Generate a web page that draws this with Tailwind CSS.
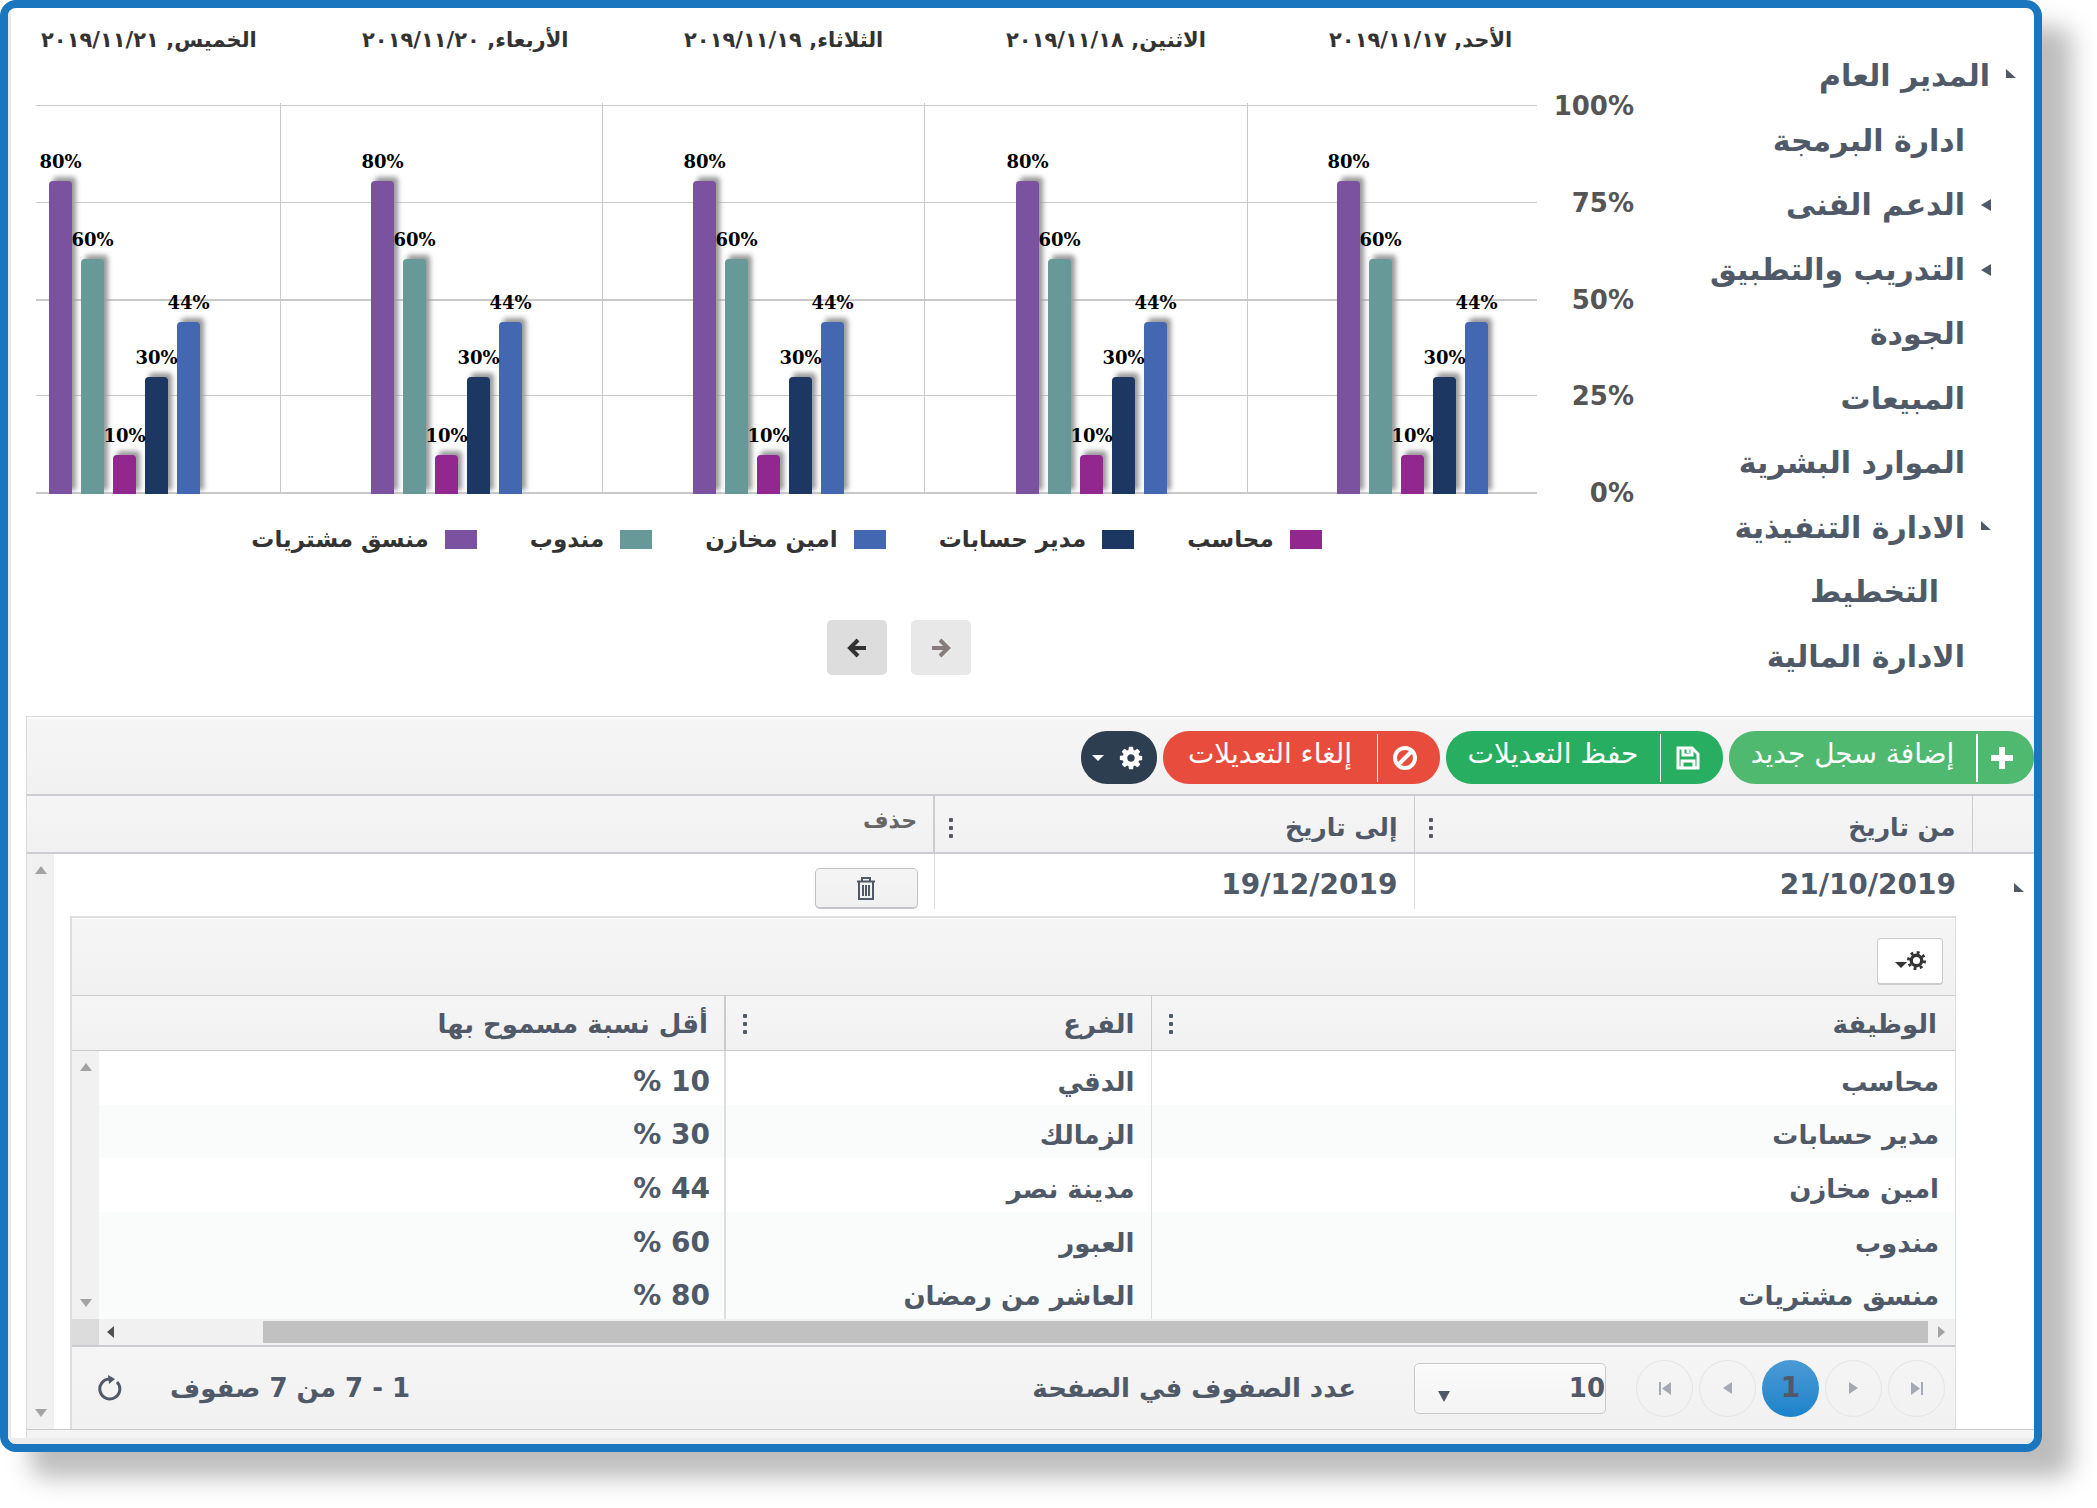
<!DOCTYPE html>
<html lang="ar" dir="rtl">
<head>
<meta charset="utf-8">
<meta name="viewport" content="width=device-width, initial-scale=1">
<title>المدير العام</title>
<script src="https://cdn.jsdelivr.net/npm/@tailwindcss/browser@4"></script>
</head>
<body class="bg-white font-['DejaVu_Sans',sans-serif] text-[#4f5968]">
<svg class="hidden" aria-hidden="true">
  <symbol id="cog" viewBox="0 0 1792 1792"><path fill="currentColor" d="M1152 896q0-106-75-181t-181-75-181 75-75 181 75 181 181 75 181-75 75-181zm512-109v222q0 12-8 23t-20 13l-185 28q-19 54-39 91 35 50 107 138 10 12 10 25t-9 23q-27 37-99 108t-94 71q-12 0-26-9l-138-108q-44 23-91 38-16 136-29 186-7 28-36 28h-222q-14 0-24.5-8.5t-11.5-21.5l-28-184q-49-16-90-37l-141 107q-10 9-25 9-14 0-25-11-126-114-165-168-7-10-7-23 0-12 8-23 15-21 51-66.500t54-70.500q-27-50-41-99l-183-27q-13-2-21-12.500t-8-23.500v-222q0-12 8-23t19-13l186-28q14-46 39-92-40-57-107-138-10-12-10-24 0-10 9-23 26-36 98.500-107.500t94.500-71.500q13 0 26 10l138 107q44-23 91-38 16-136 29-186 7-28 36-28h222q14 0 24.500 8.500t11.500 21.500l28 184q49 16 90 37l142-107q9-9 24-9 13 0 25 10 129 119 165 170 7 8 7 22 0 12-8 23-15 21-51 66.500t-54 70.500q26 50 41 98l183 28q13 2 21 12.500t8 23.500z"/></symbol>
  <symbol id="dots" viewBox="0 0 6 22"><g fill="currentColor"><rect x="1" y="1" width="4" height="4" rx="1"/><rect x="1" y="9" width="4" height="4" rx="1"/><rect x="1" y="17" width="4" height="4" rx="1"/></g></symbol>
  <symbol id="open" viewBox="0 0 10 10"><path fill="currentColor" d="M0 0v9h10z"/></symbol>
  <symbol id="closed" viewBox="0 0 10 12"><path fill="currentColor" d="M10 0v12L0 6z"/></symbol>
  <symbol id="up" viewBox="0 0 12 8"><path fill="currentColor" d="M0 8h12L6 0z"/></symbol>
  <symbol id="down" viewBox="0 0 12 8"><path fill="currentColor" d="M0 0h12L6 8z"/></symbol>
</svg>

<div class="pr-[55px] pb-[55px]">
<div class="overflow-hidden rounded-[16px] border-8 border-[#1976bf] bg-white shadow-[30px_26px_24px_#bdbdbd]">
  <main class="border-l-[3px] border-[#ebebeb]">
    <div class="flex h-[708px] flex-row-reverse justify-between">
      <section dir="ltr" class="min-w-0 flex-1 pl-[25px] pt-[22px]" aria-label="النسب">
        <div id="dates" class="mr-[155px] grid h-[75px] grid-cols-[245fr_322fr_322fr_323fr_289fr] text-[21px] leading-[20px] font-bold text-[#333]"></div>
        <div class="flex">
          <div class="relative h-[389px] min-w-0 flex-1 border-b-2 border-[#c9c9c9]">
            <div class="grid h-full grid-rows-4" aria-hidden="true">
              <div class="border-t border-[#c9c9c9]"></div><div class="border-t border-[#c9c9c9]"></div><div class="border-t-2 border-[#c9c9c9]"></div><div class="border-t border-[#c9c9c9]"></div>
            </div>
            <div id="plot" class="absolute inset-x-0 -bottom-[2px] grid h-[391px] grid-cols-[245fr_322fr_322fr_323fr_289fr]"></div>
          </div>
          <div class="-mt-[11px] -mb-[11px] flex w-[155px] shrink-0 flex-col justify-between pr-[58px] text-right text-[26px] leading-[24px] font-bold text-[#555]">
            <span>100%</span><span>75%</span><span>50%</span><span>25%</span><span>0%</span>
          </div>
        </div>
        <ul dir="rtl" class="mr-[155px] mt-[31px] flex justify-center gap-[53px] text-[23px] leading-[28px] font-bold text-[#333]">
          <li class="flex items-center gap-4"><span class="h-[19px] w-8 bg-[#92278f]"></span>محاسب</li>
          <li class="flex items-center gap-4"><span class="h-[19px] w-8 bg-[#1d3763]"></span>مدير حسابات</li>
          <li class="flex items-center gap-4"><span class="h-[19px] w-8 bg-[#4368b1]"></span>امين مخازن</li>
          <li class="flex items-center gap-4"><span class="h-[19px] w-8 bg-[#669998]"></span>مندوب</li>
          <li class="flex items-center gap-4"><span class="h-[19px] w-8 bg-[#7b529f]"></span>منسق مشتريات</li>
        </ul>
        <div class="mt-[67px] flex justify-center gap-6 pl-[70px]">
          <button class="flex h-[55px] w-[60px] items-center justify-center rounded-[5px] bg-[#ddd] text-[#333]" aria-label="السابق"><svg class="h-5 w-5" viewBox="0 0 20 20" fill="none" stroke="currentColor" stroke-width="4"><path d="M19 10H4M11 2L3 10l8 8"/></svg></button>
          <button class="flex h-[55px] w-[60px] items-center justify-center rounded-[5px] bg-[#e8e8e8] text-[#857b7b]" aria-label="التالي"><svg class="h-5 w-5" viewBox="0 0 20 20" fill="none" stroke="currentColor" stroke-width="4"><path d="M1 10h15M9 2l8 8-8 8"/></svg></button>
        </div>
      </section>
      <nav class="w-[342px] shrink-0 pt-[36px] text-[30px] leading-[40px] font-bold" aria-label="الادارات">
        <ul class="grid h-[645px] grid-rows-10 items-center">
          <li class="flex items-center gap-4 pr-[18px]"><svg class="mb-1 h-[10px] w-[10px]"><use href="#open"/></svg><a href="#">المدير العام</a></li>
          <li class="pr-[69px]"><a href="#">ادارة البرمجة</a></li>
          <li class="flex items-center gap-4 pr-[43px]"><svg class="h-3 w-[10px]"><use href="#closed"/></svg><a href="#">الدعم الفنى</a></li>
          <li class="flex items-center gap-4 pr-[43px]"><svg class="h-3 w-[10px]"><use href="#closed"/></svg><a href="#">التدريب والتطبيق</a></li>
          <li class="pr-[69px]"><a href="#">الجودة</a></li>
          <li class="pr-[69px]"><a href="#">المبيعات</a></li>
          <li class="pr-[69px]"><a href="#">الموارد البشرية</a></li>
          <li class="flex items-center gap-4 pr-[43px]"><svg class="mb-1 h-[10px] w-[10px]"><use href="#open"/></svg><a href="#">الادارة التنفيذية</a></li>
          <li class="pr-[95px]"><a href="#">التخطيط</a></li>
          <li class="pr-[69px]"><a href="#">الادارة المالية</a></li>
        </ul>
      </nav>
    </div>

    <section class="ml-[15px] border-l border-t border-[#d9dadc]">
      <div class="flex h-[77px] items-center gap-[6px] border-t-2 border-white bg-linear-to-b from-[#f5f5f5] to-[#f1f1f1] pt-[2px] text-[28px] leading-[36px] text-white">
        <button class="flex h-[53px] w-[305px] items-center rounded-[26px] bg-[#4fb96f]"><span class="flex h-12 w-[58px] items-center justify-center border-l-2 border-white pr-2"><svg class="h-6 w-6" viewBox="0 0 24 24" fill="currentColor"><path d="M9 1h6v8h8v6h-8v8H9v-8H1V9h8z"/></svg></span><span class="flex-1 pb-2">إضافة سجل جديد</span></button>
        <button class="flex h-[53px] w-[277px] items-center rounded-[26px] bg-[#27ae60]"><span class="flex h-12 w-[63px] items-center justify-center border-l border-white pr-2"><svg class="h-6 w-6" viewBox="0 0 24 24" fill="none" stroke="currentColor" stroke-width="3"><path d="M2 2h14l6 6v14H2z"/><path d="M7 2v7h9V2M12 3v4M6 22v-7h12v7"/></svg></span><span class="flex-1 pb-2">حفظ التعديلات</span></button>
        <button class="flex h-[53px] w-[277px] items-center rounded-[26px] bg-[#e74c3c]"><span class="flex h-12 w-[63px] items-center justify-center border-l border-white pr-2"><svg class="h-6 w-6" viewBox="0 0 24 24" fill="none" stroke="currentColor" stroke-width="4"><circle cx="12" cy="12" r="10"/><path d="M5 19L19 5"/></svg></span><span class="flex-1 pb-2">إلغاء التعديلات</span></button>
        <button class="flex h-[53px] w-[76px] items-center justify-center gap-[14px] rounded-[26px] bg-[#2c3e50] pr-[2px]" aria-label="إعدادات"><svg class="h-[26px] w-[26px]"><use href="#cog"/></svg><svg class="h-[6px] w-3" viewBox="0 0 12 6"><path fill="currentColor" d="M0 0h12L6 6z"/></svg></button>
      </div>
      <table class="w-full table-fixed border-y-2 border-[#cccdd2] bg-linear-to-b from-[#f5f5f5] to-[#f1f1f1] text-right text-[25px]">
        <colgroup><col class="w-[62px]"><col class="w-[558px]"><col class="w-[480px]"><col></colgroup>
        <thead><tr class="h-[58px]">
          <th></th>
          <th class="border-r border-[#cccdd2] pr-4 pl-[13px]"><div class="flex items-center justify-between pt-2">من تاريخ<svg class="h-[22px] w-[6px]"><use href="#dots"/></svg></div></th>
          <th class="border-r border-[#cccdd2] pr-4 pl-[13px]"><div class="flex items-center justify-between pt-2">إلى تاريخ<svg class="h-[22px] w-[6px]"><use href="#dots"/></svg></div></th>
          <th class="border-r-2 border-[#cccdd2] pr-4 pb-2 text-[22px] text-[#666]">حذف</th>
        </tr></thead>
      </table>

      <div class="flex">
        <div class="min-w-0 flex-1">
          <table class="w-full table-fixed text-right">
            <colgroup><col class="w-[62px]"><col class="w-[558px]"><col class="w-[480px]"><col></colgroup>
            <tbody>
              <tr class="h-[55px] text-[28px] font-bold">
                <td class="pr-[10px] pt-3"><svg class="h-[10px] w-[10px]"><use href="#open"/></svg></td>
                <td class="pt-[6px] pr-4">21/10/2019</td>
                <td class="border-r border-[#dedee0] pt-[6px] pr-4">19/12/2019</td>
                <td class="border-r border-[#dedee0] pr-4 align-bottom">
                  <button class="flex h-[41px] w-[103px] items-center justify-center rounded-[5px] border border-b-2 border-[#c3c4c9] bg-linear-to-b from-[#f5f5f5] to-[#f0f0f0]" aria-label="حذف"><svg class="h-[23px] w-[18px]" viewBox="0 0 18 23" fill="none" stroke="currentColor" stroke-width="2"><path d="M0 4.500h18M5 4V1h8v3M2 5v17h14V5M6 8v11M9 8v11M12 8v11"/></svg></button>
                </td>
              </tr>
              <tr><td colspan="4" class="pt-[7px] pr-[78px] pl-4 align-top">

                <div class="border-t-2 border-r border-l-2 border-[#dcdddd]">
                  <div class="flex h-[77px] items-center border-t border-white bg-linear-to-b from-[#f5f5f5] to-[#f1f1f1] pt-2 pr-3">
                    <button class="flex h-[47px] w-[66px] items-center justify-center rounded-[4px] border border-b-2 border-[#ccc] bg-white text-[#333]" aria-label="إعدادات"><svg class="h-[19px] w-[19px]" viewBox="0 0 20 20" fill="none" stroke="currentColor"><circle cx="10" cy="10" r="5.500" stroke-width="3.500"/><circle cx="10" cy="10" r="8.500" stroke-width="3" stroke-dasharray="3 3.675"/></svg><svg class="mt-2 h-[6px] w-3" viewBox="0 0 12 6"><path fill="currentColor" d="M0 0h12L6 6z"/></svg></button>
                  </div>
                  <table class="w-full table-fixed border-y border-[#cacbcd] bg-linear-to-b from-[#f5f5f5] to-[#f1f1f1] text-right text-[26px] leading-[36px]">
                    <colgroup><col class="w-[804px]"><col class="w-[426px]"><col></colgroup>
                    <thead><tr class="h-[55px]">
                      <th class="pt-[2px] pr-[18px] pl-4"><div class="flex items-center justify-between">الوظيفة<svg class="h-[22px] w-[6px]"><use href="#dots"/></svg></div></th>
                      <th class="border-r border-[#cacbcd] pt-[2px] pr-4 pl-4"><div class="flex items-center justify-between">الفرع<svg class="h-[22px] w-[6px]"><use href="#dots"/></svg></div></th>
                      <th class="border-r-2 border-[#cacbcd] pt-[2px] pr-4">أقل نسبة مسموح بها</th>
                    </tr></thead>
                  </table>
                  <div class="flex h-[268px]">
                    <table class="h-full min-w-0 flex-1 table-fixed text-right text-[26px] leading-[36px] font-bold">
                      <colgroup><col class="w-[804px]"><col class="w-[426px]"><col></colgroup>
                      <tbody>
                        <tr><td class="pt-2 pr-4">محاسب</td><td class="border-r border-[#dedee0] pt-2 pr-4">الدقي</td><td class="border-r-2 border-[#dedee0] pt-2 pr-[14px] text-[28px]">10 %</td></tr>
                        <tr class="bg-[#fafcfb]"><td class="pt-2 pr-4">مدير حسابات</td><td class="border-r border-[#dedee0] pt-2 pr-4">الزمالك</td><td class="border-r-2 border-[#dedee0] pt-2 pr-[14px] text-[28px]">30 %</td></tr>
                        <tr><td class="pt-2 pr-4">امين مخازن</td><td class="border-r border-[#dedee0] pt-2 pr-4">مدينة نصر</td><td class="border-r-2 border-[#dedee0] pt-2 pr-[14px] text-[28px]">44 %</td></tr>
                        <tr class="bg-[#fafcfb]"><td class="pt-2 pr-4">مندوب</td><td class="border-r border-[#dedee0] pt-2 pr-4">العبور</td><td class="border-r-2 border-[#dedee0] pt-2 pr-[14px] text-[28px]">60 %</td></tr>
                        <tr class="bg-[#fafcfb]"><td class="pt-2 pr-4">منسق مشتريات</td><td class="border-r border-[#dedee0] pt-2 pr-4">العاشر من رمضان</td><td class="border-r-2 border-[#dedee0] pt-2 pr-[14px] text-[28px]">80 %</td></tr>
                      </tbody>
                    </table>
                    <div class="flex w-[27px] shrink-0 flex-col items-center justify-between bg-[#f1f1f1] py-3 text-[#a3a3a3]"><svg class="h-2 w-3"><use href="#up"/></svg><svg class="h-2 w-3"><use href="#down"/></svg></div>
                  </div>
                  <div class="flex h-[26px] items-center bg-[#f1f1f1]">
                    <svg class="mx-[10px] h-3 w-[7px] text-[#a3a3a3]" viewBox="0 0 7 12"><path fill="currentColor" d="M0 0v12l7-6z"/></svg>
                    <div class="ml-[149px] h-[22px] flex-1 bg-[#c1c1c1]"></div>
                    <svg class="ml-2 h-3 w-[7px] text-[#505050]" viewBox="0 0 7 12"><path fill="currentColor" d="M7 0v12L0 6z"/></svg>
                    <div class="h-[26px] w-[27px] bg-[#dcdcdc]"></div>
                  </div>
                  <div class="flex h-[84px] items-center border-t-2 border-[#cccdd2] bg-linear-to-b from-[#f5f5f5] to-[#f1f1f1] pr-[10px] pl-[26px] text-[26px] font-bold">
                    <div class="flex gap-[6px] text-[#a4a9b3]">
                      <button class="flex h-[57px] w-[57px] items-center justify-center rounded-full border border-[#e4e4e4]" aria-label="الصفحة الأخيرة"><svg class="h-[13px] w-3" viewBox="0 0 12 13"><path fill="currentColor" d="M0 0v13l9-6.500zM10 0h2v13h-2z"/></svg></button>
                      <button class="flex h-[57px] w-[57px] items-center justify-center rounded-full border border-[#e4e4e4]" aria-label="الصفحة التالية"><svg class="h-3 w-[9px]" viewBox="0 0 9 12"><path fill="currentColor" d="M0 0v12l9-6z"/></svg></button>
                      <button class="flex h-[57px] w-[57px] items-center justify-center rounded-full bg-linear-to-b from-[#4a9ad4] to-[#1a83cb] text-[28px] text-[#4f5968]">1</button>
                      <button class="flex h-[57px] w-[57px] items-center justify-center rounded-full border border-[#e4e4e4]" aria-label="الصفحة السابقة"><svg class="h-3 w-[9px]" viewBox="0 0 9 12"><path fill="currentColor" d="M9 0v12L0 6z"/></svg></button>
                      <button class="flex h-[57px] w-[57px] items-center justify-center rounded-full border border-[#e4e4e4]" aria-label="الصفحة الأولى"><svg class="h-[13px] w-3" viewBox="0 0 12 13"><path fill="currentColor" d="M12 0v13L3 6.500zM0 0h2v13H0z"/></svg></button>
                    </div>
                    <div class="relative mr-[30px]">
                      <select id="size" class="h-[51px] w-[192px] appearance-none rounded-[5px] border border-[#c9cace] bg-linear-to-b from-[#fafafa] to-[#f4f4f4] text-[26px]"><option>10</option></select>
                      <svg class="pointer-events-none absolute bottom-3 left-6 h-[11px] w-3" viewBox="0 0 12 11"><path fill="currentColor" d="M0 0h12L6 11z"/></svg>
                    </div>
                    <label for="size" class="mr-[58px]">عدد الصفوف في الصفحة</label>
                    <span class="mr-auto">1 - 7 من 7 صفوف</span>
                    <button class="mr-12" aria-label="تحديث"><svg class="h-[26px] w-6" viewBox="0 0 24 26" fill="none" stroke="currentColor" stroke-width="3"><path d="M19 7a10 10 0 1 1-8-3"/><path d="M10 0l7 4-6 5z" fill="currentColor" stroke="none"/></svg></button>
                  </div>
                </div>
              </td></tr>
            </tbody>
          </table>
        </div>
        <div class="flex w-[27px] shrink-0 flex-col items-center justify-between bg-[#f1f1f1] py-3 text-[#a3a3a3]"><svg class="h-2 w-3"><use href="#up"/></svg><svg class="h-2 w-3"><use href="#down"/></svg></div>
      </div>
      <div class="h-[9px] border-t border-[#cacbcd] bg-[#f4f4f4]"></div>
    </section>
    <div class="h-[6px] bg-[#ececec]"></div>
  </main>
</div>
</div>

<script>
const series = [
  { value: 80, color: '#7b529f' },
  { value: 60, color: '#669998' },
  { value: 10, color: '#92278f' },
  { value: 30, color: '#1d3763' },
  { value: 44, color: '#4368b1' },
];
const days = [
  { label: 'الخميس, ٢٠١٩/١١/٢١', date: 'pl-[5px]', cell: 'border-r border-[#c9c9c9] pr-[80px]' },
  { label: 'الأربعاء, ٢٠١٩/١١/٢٠', date: 'pl-[81px]', cell: 'border-r border-[#c9c9c9] pr-[80px]' },
  { label: 'الثلاثاء, ٢٠١٩/١١/١٩', date: 'pl-[81px]', cell: 'border-r border-[#c9c9c9] pr-[80px]' },
  { label: 'الاثنين, ٢٠١٩/١١/١٨', date: 'pl-[81px]', cell: 'border-r border-[#c9c9c9] pr-[80px]' },
  { label: 'الأحد, ٢٠١٩/١١/١٧', date: 'pl-[81px]', cell: 'pr-[49px]' },
];
const plot = document.getElementById('plot');
const dates = document.getElementById('dates');
const bars = series.map(s => `<div class="w-[23px] rounded-t-[4px] shadow-[4px_-4px_5px_#999]" style="height:${s.value}%;background:${s.color}"></div>`).join('');
const labels = series.map(s => `<div class="flex h-full w-[23px] flex-col items-center justify-end"><span class="pb-2 leading-[22px]">${s.value}%</span><i class="block shrink-0" style="height:${s.value}%"></i></div>`).join('');
days.forEach(day => {
  dates.insertAdjacentHTML('beforeend', `<div class="min-w-0 whitespace-nowrap ${day.date}"><span dir="rtl">${day.label}</span></div>`);
  plot.insertAdjacentHTML('beforeend', `<div class="grid h-[391px] min-w-0 justify-end ${day.cell}"><div class="col-start-1 row-start-1 flex h-full items-end gap-[9px]">${bars}</div><div class="col-start-1 row-start-1 flex h-full gap-[9px] font-['DejaVu_Serif',serif] text-[18px] font-bold text-black">${labels}</div></div>`);
});
</script>
</body>
</html>
